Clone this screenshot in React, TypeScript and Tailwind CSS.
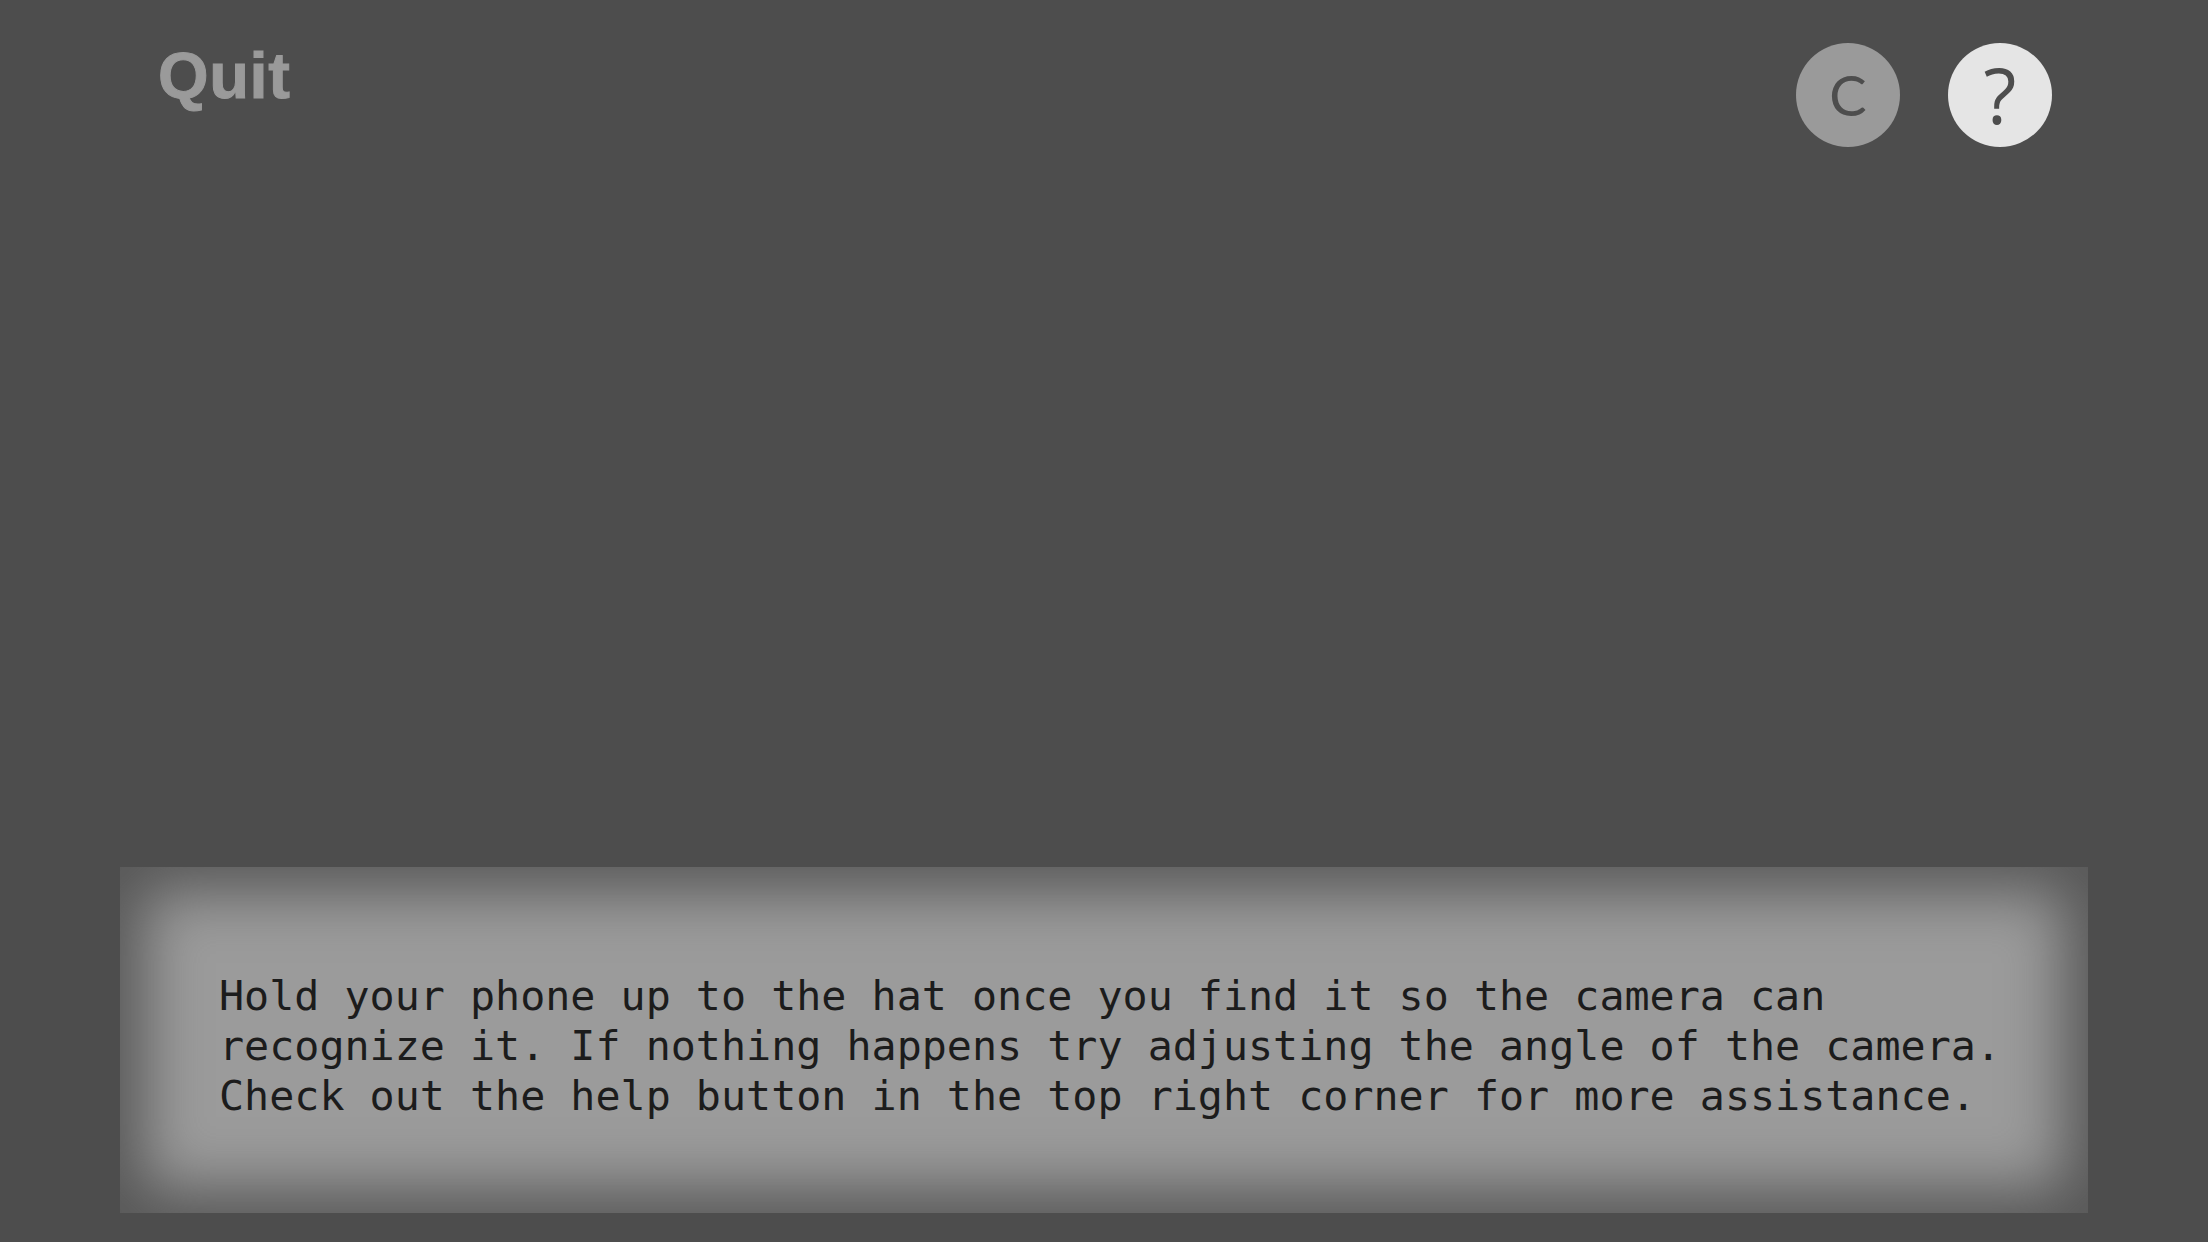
const LINES = [
  'Hold your phone up to the hat once you find it so the camera can',
  'recognize it. If nothing happens try adjusting the angle of the camera.',
  'Check out the help button in the top right corner for more assistance.',
];

export default function App() {
  return (
    <div className="flex h-[1242px] w-full flex-col justify-between bg-[#4d4d4d]">
      <header className="flex items-start justify-between pl-[158px] pr-[156px] pt-[43px]">
        <button className="font-['Liberation_Sans',Arial,sans-serif] text-[65px] font-bold leading-none tracking-[0.01em] text-[#9a9a9a] [-webkit-text-stroke:1px_#9a9a9a]">
          Quit
        </button>
        <div className="flex items-center gap-[48px]">
          <button className="flex h-[104px] w-[104px] items-center justify-center rounded-full bg-[#9a9a9a] font-['Lato',sans-serif] text-[56px] leading-none text-[#4d4d4d]">
            C
          </button>
          <button className="flex h-[104px] w-[104px] items-center justify-center rounded-full bg-[#e5e5e5] font-['Open_Sans',sans-serif] text-[76px] leading-none text-[#4d4d4d]">
            ?
          </button>
        </div>
      </header>

      <section className="mx-[120px] mb-[29px] h-[346px] bg-[#9b9b9b] pl-[99px] pt-[104px] shadow-[inset_0_0_60px_24px_#575757]">
        <p className="font-['DejaVu_Sans_Mono',monospace] text-[41.7px] leading-[50px] text-[#1c1c1c]">
          {LINES.map((line) => (
            <span key={line} className="block whitespace-pre">
              {line}
            </span>
          ))}
        </p>
      </section>
    </div>
  );
}
